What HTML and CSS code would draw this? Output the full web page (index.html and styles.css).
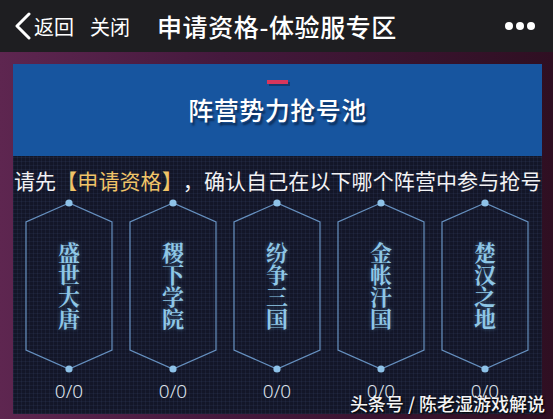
FILE: index.html
```html
<!DOCTYPE html>
<html lang="zh-CN">
<head>
    <meta charset="UTF-8">
    <meta name="viewport" content="width=device-width, initial-scale=1.0">
    <title>申请资格-体验服专区</title>
    <link rel="stylesheet" href="styles.css">
</head>
<body>
    <div class="topbar">
        <a class="back">
            <svg width="18" height="28" viewBox="0 0 18 28"><polyline points="15,2 3,14 15,26" fill="none" stroke="#fff" stroke-width="3" stroke-linecap="round" stroke-linejoin="round"/></svg>
            <span>返回</span>
        </a>
        <a class="close">关闭</a>
        <div class="title">申请资格-体验服专区</div>
        <div class="more"><i></i><i></i><i></i></div>
    </div>

    <div class="panel">
        <div class="panel-head">
            <div class="dash"></div>
            <h2>阵营势力抢号池</h2>
        </div>
        <div class="panel-body">
            <p class="intro">请先<span class="hl">【申请资格】</span>，确认自己在以下哪个阵营中参与抢号</p>
            <div class="camps">
                <div class="camp">
                    <div class="card">
                        <svg class="frame" width="88" height="174" viewBox="0 0 88 174"><polygon points="44,4 1,23 1,151 44,170 87,151 87,23"/><circle cx="44" cy="4" r="3.6"/><circle cx="44" cy="170" r="3.6"/></svg>
                        <span class="name">盛世大唐</span>
                    </div>
                    <div class="count">0/0</div>
                </div>
                <div class="camp">
                    <div class="card">
                        <svg class="frame" width="88" height="174" viewBox="0 0 88 174"><polygon points="44,4 1,23 1,151 44,170 87,151 87,23"/><circle cx="44" cy="4" r="3.6"/><circle cx="44" cy="170" r="3.6"/></svg>
                        <span class="name">稷下学院</span>
                    </div>
                    <div class="count">0/0</div>
                </div>
                <div class="camp">
                    <div class="card">
                        <svg class="frame" width="88" height="174" viewBox="0 0 88 174"><polygon points="44,4 1,23 1,151 44,170 87,151 87,23"/><circle cx="44" cy="4" r="3.6"/><circle cx="44" cy="170" r="3.6"/></svg>
                        <span class="name">纷争三国</span>
                    </div>
                    <div class="count">0/0</div>
                </div>
                <div class="camp">
                    <div class="card">
                        <svg class="frame" width="88" height="174" viewBox="0 0 88 174"><polygon points="44,4 1,23 1,151 44,170 87,151 87,23"/><circle cx="44" cy="4" r="3.6"/><circle cx="44" cy="170" r="3.6"/></svg>
                        <span class="name">金帐汗国</span>
                    </div>
                    <div class="count">0/0</div>
                </div>
                <div class="camp">
                    <div class="card">
                        <svg class="frame" width="88" height="174" viewBox="0 0 88 174"><polygon points="44,4 1,23 1,151 44,170 87,151 87,23"/><circle cx="44" cy="4" r="3.6"/><circle cx="44" cy="170" r="3.6"/></svg>
                        <span class="name">楚汉之地</span>
                    </div>
                    <div class="count">0/0</div>
                </div>
            </div>
        </div>
        <div class="mark">头条号 / 陈老湿游戏解说</div>
    </div>
</body>
</html>
```

FILE: styles.css
```css
html, body {
    margin: 0;
    height: 100%;
}
body {
    font-family: "Noto Sans CJK SC", "Noto Sans", sans-serif;
    background: linear-gradient(90deg, #5e2650 0%, #45193d 40%, #2f0f22 100%);
    color: #fff;
    overflow: hidden;
}
.topbar {
    height: 52px;
    background-color: #1e1e21;
    display: flex;
    align-items: center;
    padding-left: 14px;
    padding-right: 18px;
}
.back {
    display: flex;
    align-items: center;
    font-size: 20px;
    color: #fff;
}
.back svg {
    margin-right: 2px;
}
.close {
    font-size: 20px;
    margin-left: 16px;
    color: #fff;
}
.title {
    font-size: 25px;
    font-weight: 500;
    margin-left: 27px;
    letter-spacing: 0.6px;
}
.more {
    margin-left: auto;
    display: flex;
    gap: 3px;
}
.more i {
    width: 8px;
    height: 8px;
    border-radius: 50%;
    background-color: #fff;
}
.panel {
    position: relative;
    margin: 12px 11px 0 13px;
}
.panel-head {
    height: 92px;
    background-color: #17559f;
    display: flex;
    flex-direction: column;
    align-items: center;
}
.dash {
    width: 21px;
    height: 4px;
    margin-top: 16px;
    background-color: #d8365c;
    box-shadow: 2px 2px 0 #123a70;
}
.panel-head h2 {
    margin: 7px 0 0;
    font-size: 25px;
    font-weight: 500;
    line-height: 36px;
    letter-spacing: 0.5px;
    text-shadow: 2px 3px 2px #0c2f5c;
}
.panel-body {
    background-color: #131628;
    background-image:
        repeating-linear-gradient(0deg, rgba(90, 110, 160, 0.10) 0 1px, transparent 1px 4px),
        repeating-linear-gradient(90deg, rgba(90, 110, 160, 0.10) 0 1px, transparent 1px 4px);
    padding: 10px 0 11px;
}
.intro {
    margin: 0 0 5px 1px;
    font-size: 21px;
    line-height: 28px;
    letter-spacing: 0.1px;
    white-space: nowrap;
    text-spacing-trim: space-all;
    color: #f2f2f4;
}
.hl {
    color: #f0c468;
}
.camps {
    display: flex;
    gap: 16px;
    padding-left: 12px;
}
.camp {
    display: flex;
    flex-direction: column;
    align-items: center;
    width: 88px;
}
.card {
    position: relative;
    width: 88px;
    height: 174px;
    display: flex;
    align-items: center;
    justify-content: center;
}
.frame {
    position: absolute;
    left: 0;
    top: 0;
}
.frame polygon {
    fill: none;
    stroke: #6690bf;
    stroke-width: 1.2;
}
.frame circle {
    fill: #8ec2e8;
}
.name {
    position: relative;
    writing-mode: vertical-rl;
    font-family: "Noto Serif CJK SC", "Noto Sans CJK SC", serif;
    font-size: 22px;
    font-weight: 700;
    color: #8fc7e6;
    text-shadow: 0 0 4px rgba(110, 180, 230, 0.45);
}
.count {
    margin-top: 6px;
    font-family: "Noto Sans", sans-serif;
    font-size: 19px;
    font-weight: 300;
    line-height: 24px;
    color: #dfe3ec;
}
.mark {
    position: absolute;
    right: -3px;
    bottom: 0;
    font-size: 18px;
    font-weight: 500;
    line-height: 22px;
    color: #f4f4f4;
    text-shadow: 1px 1px 2px #000;
}
```
